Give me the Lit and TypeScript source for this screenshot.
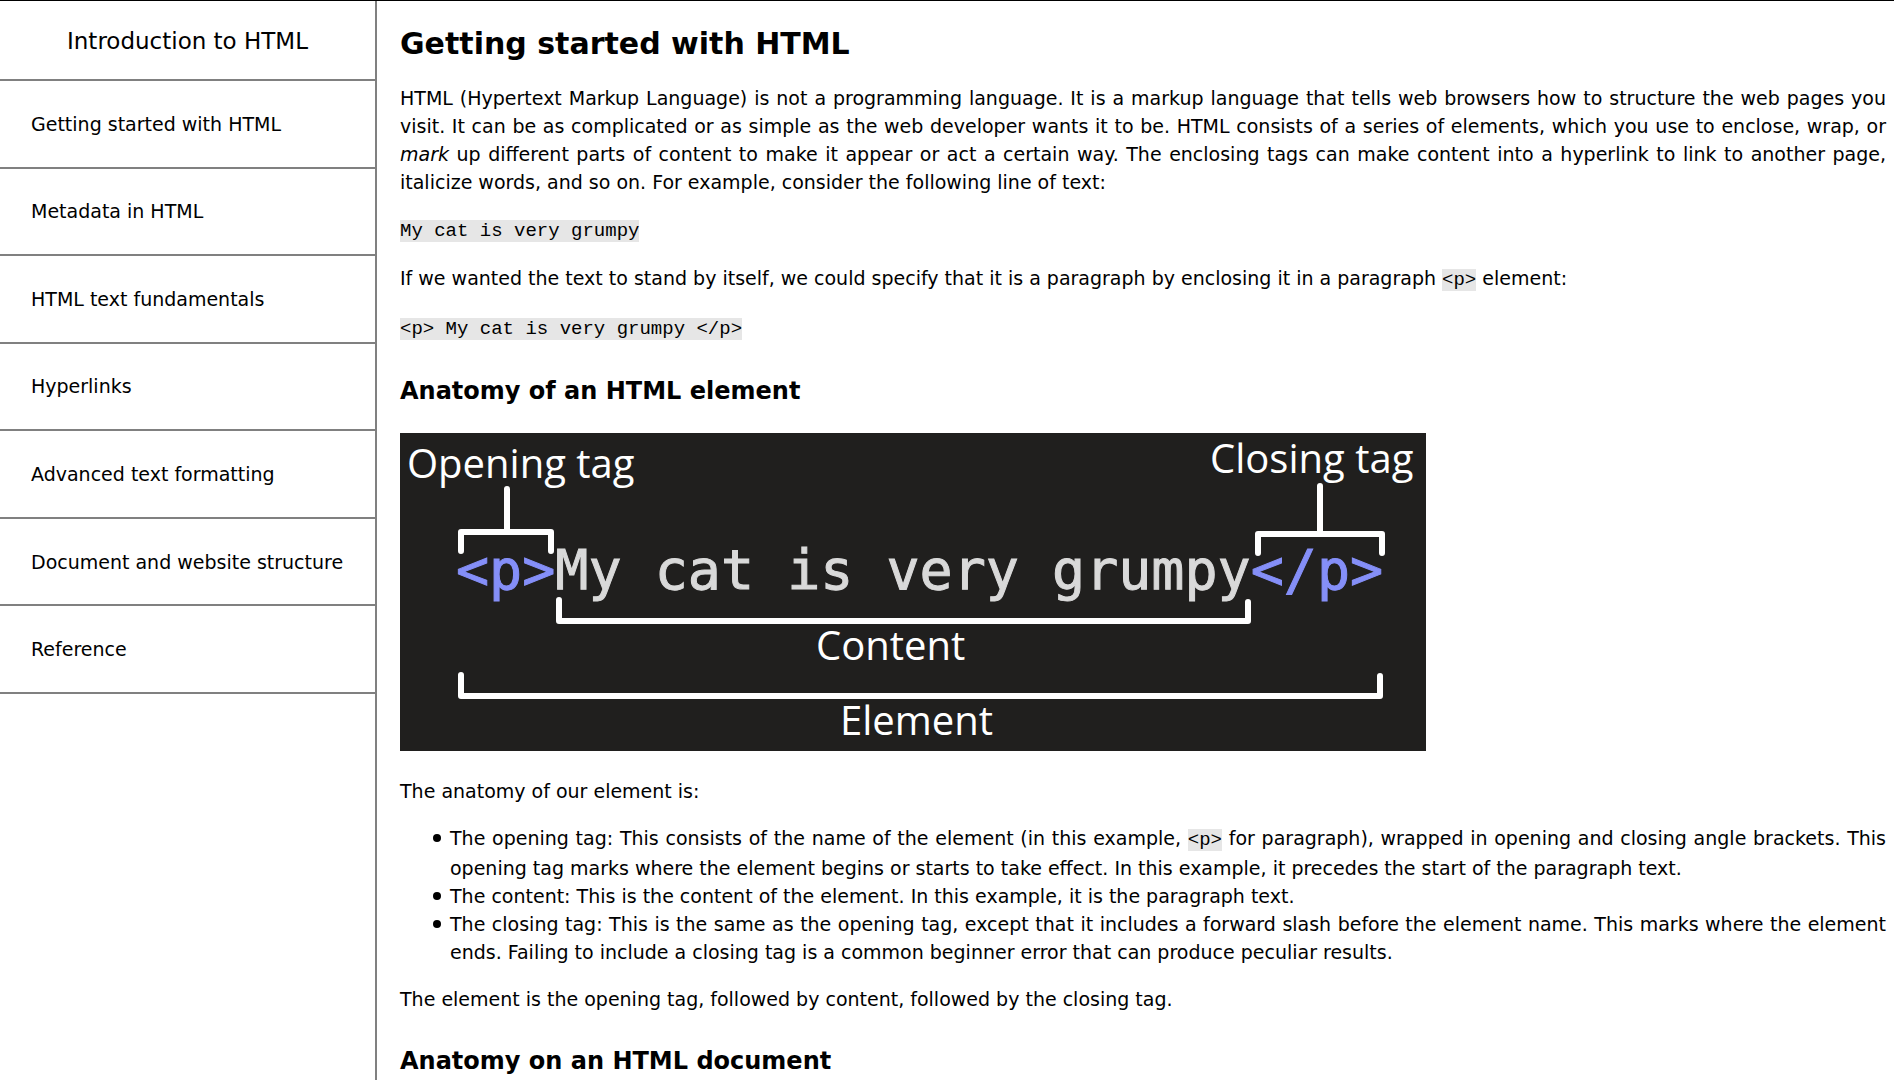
import { LitElement, html, css } from "lit";
import { customElement } from "lit/decorators.js";

interface Topic {
  label: string;
  slug: string;
}

const TOPICS: Topic[] = [
  { label: "Getting started with HTML", slug: "getting-started" },
  { label: "Metadata in HTML", slug: "metadata" },
  { label: "HTML text fundamentals", slug: "text-fundamentals" },
  { label: "Hyperlinks", slug: "hyperlinks" },
  { label: "Advanced text formatting", slug: "advanced-formatting" },
  { label: "Document and website structure", slug: "structure" },
  { label: "Reference", slug: "reference" },
];

@customElement("topic-nav")
export class TopicNav extends LitElement {
  static styles = css`
    :host {
      display: block;
      border-right: 2px solid #808080;
    }
    .title {
      margin: 0;
      padding: 24px 16px 22px;
      border-bottom: 2px solid #808080;
      font-size: 23px;
      font-weight: 400;
      line-height: 32px;
      text-align: center;
    }
    .list {
      display: grid;
      grid-auto-rows: 1fr;
      min-height: 613px;
      margin: 0;
      padding: 0;
      list-style: none;
    }
    .item {
      display: flex;
      border-bottom: 2px solid #808080;
    }
    .link {
      display: flex;
      flex: 1;
      align-items: center;
      padding: 0 31px;
      color: inherit;
      text-decoration: none;
    }
  `;

  render() {
    return html`
      <nav aria-labelledby="nav-title">
        <h2 class="title" id="nav-title">Introduction to HTML</h2>
        <ul class="list">
          ${TOPICS.map(
            (t) => html`<li class="item"><a class="link" href="#${t.slug}">${t.label}</a></li>`
          )}
        </ul>
      </nav>
    `;
  }
}

@customElement("element-diagram")
export class ElementDiagram extends LitElement {
  static styles = css`
    :host {
      display: block;
      max-width: 1026px;
    }
    .diagram {
      display: block;
      width: 100%;
      height: auto;
      background: #201f1e;
    }
    .label {
      fill: #ffffff;
      font-family: "Open Sans", "Noto Sans", sans-serif;
      font-size: 40px;
    }
    .code {
      fill: #d9d9d9;
      stroke: #d9d9d9;
      stroke-width: 1;
      font-family: "DejaVu Sans Mono", monospace;
      font-size: 55px;
      white-space: pre;
    }
    .tag {
      fill: #858ff8;
      stroke: #858ff8;
    }
    .bracket {
      fill: none;
      stroke: #ffffff;
      stroke-width: 6;
      stroke-linecap: round;
      stroke-linejoin: round;
    }
  `;

  render() {
    return html`
      <svg class="diagram" viewBox="0 0 1026 318" role="img" aria-label="Parts of an HTML element">
        <text class="label" x="7" y="45">Opening tag</text>
        <text class="label" x="810" y="40">Closing tag</text>
        <path class="bracket" d="M61 118V99H151V118M107 56V99" />
        <path class="bracket" d="M858 120V101H982V120M920 53V101" />
        <text class="code" x="56" y="156"><tspan class="tag">&lt;p&gt;</tspan>My cat is very grumpy<tspan class="tag">&lt;/p&gt;</tspan></text>
        <path class="bracket" d="M159 167V188H848V169" />
        <text class="label" x="416" y="227">Content</text>
        <path class="bracket" d="M61 242V263H980V243" />
        <text class="label" x="440" y="302">Element</text>
      </svg>
    `;
  }
}

@customElement("app-root")
export class AppRoot extends LitElement {
  static styles = css`
    :host {
      display: grid;
      grid-template-columns: 377px minmax(0, 1fr);
      box-sizing: border-box;
      min-height: 100vh;
      border-top: 1px solid #000000;
      background: #ffffff;
      color: #000000;
      font-family: "DejaVu Sans", Verdana, sans-serif;
      font-size: 19px;
      line-height: 28px;
    }
    .content {
      padding: 22px 8px 0 23px;
    }
    .heading {
      margin: 0 0 19px;
      font-size: 30px;
      line-height: 42px;
    }
    .subheading {
      margin: 31px 0 0;
      font-size: 24px;
      line-height: 34px;
    }
    .text {
      margin: 19px 0;
      text-align: justify;
    }
    .figure {
      margin: 25px 0 26px;
    }
    .points {
      margin: 19px 0;
      padding-left: 50px;
      list-style: none;
      text-align: justify;
    }
    .point {
      position: relative;
    }
    .point::before {
      content: "";
      position: absolute;
      top: 10px;
      left: -17px;
      width: 8px;
      height: 8px;
      border-radius: 50%;
      background: currentColor;
    }
    .code {
      background: #e6e6e6;
      font-family: "Liberation Mono", "Courier New", monospace;
    }
  `;

  render() {
    return html`
      <topic-nav></topic-nav>
      <main class="content">
        <h1 class="heading">Getting started with HTML</h1>
        <p class="text">
          HTML (Hypertext Markup Language) is not a programming language. It is a markup language
          that tells web browsers how to structure the web pages you visit. It can be as complicated
          or as simple as the web developer wants it to be. HTML consists of a series of elements,
          which you use to enclose, wrap, or <em>mark</em> up different parts of content to make it
          appear or act a certain way. The enclosing tags can make content into a hyperlink to link
          to another page, italicize words, and so on. For example, consider the following line of
          text:
        </p>
        <p class="text"><code class="code">My cat is very grumpy</code></p>
        <p class="text">
          If we wanted the text to stand by itself, we could specify that it is a paragraph by
          enclosing it in a paragraph <code class="code">&lt;p&gt;</code> element:
        </p>
        <p class="text"><code class="code">&lt;p&gt; My cat is very grumpy &lt;/p&gt;</code></p>
        <h2 class="subheading">Anatomy of an HTML element</h2>
        <element-diagram class="figure"></element-diagram>
        <p class="text">The anatomy of our element is:</p>
        <ul class="points">
          <li class="point">
            The opening tag: This consists of the name of the element (in this example,
            <code class="code">&lt;p&gt;</code> for paragraph), wrapped in opening and closing angle
            brackets. This opening tag marks where the element begins or starts to take effect. In
            this example, it precedes the start of the paragraph text.
          </li>
          <li class="point">
            The content: This is the content of the element. In this example, it is the paragraph
            text.
          </li>
          <li class="point">
            The closing tag: This is the same as the opening tag, except that it includes a forward
            slash before the element name. This marks where the element ends. Failing to include a
            closing tag is a common beginner error that can produce peculiar results.
          </li>
        </ul>
        <p class="text">
          The element is the opening tag, followed by content, followed by the closing tag.
        </p>
        <h2 class="subheading">Anatomy on an HTML document</h2>
      </main>
    `;
  }
}
